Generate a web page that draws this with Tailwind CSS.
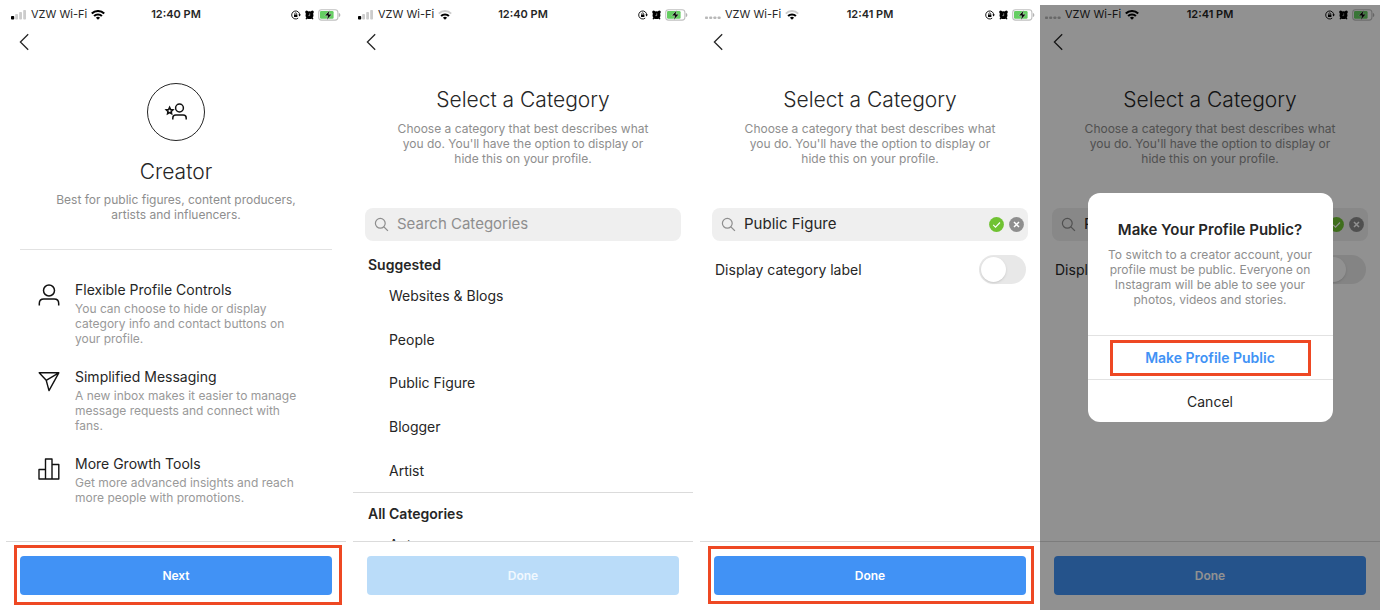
<!DOCTYPE html>
<html lang="en">
<head>
<meta charset="utf-8">
<meta name="viewport" content="width=device-width, initial-scale=1">
<title>Switch to a creator account</title>
<script src="https://cdn.jsdelivr.net/npm/@tailwindcss/browser@4"></script>
</head>
<body class="bg-white font-['Inter','Liberation_Sans',sans-serif] text-[#262626]">
<svg class="hidden" aria-hidden="true">
  <symbol id="bars" viewBox="0 0 16 10"><rect x="0" y="6" width="3.2" height="3.6" rx=".8" fill="#000"/><rect x="4.2" y="4" width="2.8" height="5.6" rx=".8" fill="#ccc"/><rect x="8.2" y="2" width="2.8" height="7.6" rx=".8" fill="#ccc"/><rect x="12.2" y="0" width="2.8" height="9.6" rx=".8" fill="#ccc"/></symbol>
  <symbol id="dots" viewBox="0 0 16 10"><g fill="#000" fill-opacity=".28"><rect x="0" y="6.400" width="3" height="2.6" rx=".8"/><rect x="4.2" y="6.400" width="3" height="2.6" rx=".8"/><rect x="8.4" y="6.400" width="3" height="2.6" rx=".8"/><rect x="12.6" y="6.400" width="3" height="2.6" rx=".8"/></g></symbol>
  <symbol id="wifi" viewBox="0 0 14 10"><g fill="none" stroke="#000" stroke-width="2.100"><path d="M.8 3.6a8.8 8.8 0 0 1 12.4 0"/><path d="M3.1 6.1a5.6 5.6 0 0 1 7.8 0"/></g><path d="M7 9.8 4.9 7.7a3 3 0 0 1 4.2 0z"/></symbol>
  <symbol id="wifi-low" viewBox="0 0 14 10"><path d="M.8 3.6a8.8 8.8 0 0 1 12.4 0" fill="none" stroke="#ccc" stroke-width="1.9"/><path d="M3.1 6.1a5.6 5.6 0 0 1 7.8 0" fill="none" stroke="#000" stroke-width="2.100"/><path d="M7 9.8 4.9 7.7a3 3 0 0 1 4.2 0z"/></symbol>
  <symbol id="rotation" viewBox="0 0 10 10"><path d="M8.7 5A4 4 0 1 0 7.2 8.1" fill="none" stroke="#000" stroke-width=".9"/><path d="M7.3 4.6h2.6L8.6 6.4z"/><rect x="3" y="4.4" width="3.4" height="2.6" rx=".3"/><path d="M3.7 4.6V3.8a1 1 0 0 1 2 0v.8" fill="none" stroke="#000" stroke-width=".7"/></symbol>
  <symbol id="alarm" viewBox="0 0 9 10"><circle cx="4.5" cy="5.2" r="3.9"/><circle cx="1.7" cy="2" r="1.500"/><circle cx="7.3" cy="2" r="1.500"/><path d="m1.700 8-.6 1.300M7.300 8l.6 1.300" stroke="#000" stroke-width="1.300"/><path d="M4.700 3.400v2.200H3.400" fill="none" stroke="#fff" stroke-opacity=".8" stroke-width=".6"/></symbol>
  <symbol id="battery" viewBox="0 0 23 12"><rect x=".7" y=".7" width="19.2" height="10.4" rx="2.8" fill="none" stroke="#000" stroke-opacity=".25" stroke-width="1.1"/><path d="M20.9 4v4c1-.3 1.4-1.1 1.4-2s-.4-1.700-1.400-2z" fill="#000" fill-opacity=".3"/><rect x="2" y="2" width="13.600" height="7.800" rx="1.300" fill="#65ce62"/><path d="M11.600 1.200 6.800 6.700h3l-1 4.300 5.100-5.700h-3.100z" stroke="#fff" stroke-opacity=".6" stroke-width=".6"/></symbol>
  <symbol id="back" viewBox="0 0 10 18"><path d="M9.200 1.200 1.400 9l7.800 7.800" fill="none" stroke="#262626" stroke-width="1.300"/></symbol>
  <symbol id="search" viewBox="0 0 15 15"><circle cx="6.300" cy="6.300" r="4.900" fill="none" stroke="#8e8e8e" stroke-width="1.200"/><path d="m9.900 9.900 4 4" stroke="#8e8e8e" stroke-width="1.300"/></symbol>
  <symbol id="check" viewBox="0 0 15 15"><circle cx="7.500" cy="7.500" r="7.400" fill="#70c232"/><path d="m4.200 7.900 2.300 2.300 4.500-4.700" fill="none" stroke="#fff" stroke-width="1.100"/></symbol>
  <symbol id="clear" viewBox="0 0 15 15"><circle cx="7.500" cy="7.500" r="7.400" fill="#8e8e8e"/><path d="m5 5 5 5m0-5-5 5" stroke="#fff" stroke-width="1.500"/></symbol>
</svg>

<main class="flex min-h-screen pt-[5px] pr-0.5 pb-0.5 pl-1.5">

  <!-- Creator introduction -->
  <section class="flex min-w-0 flex-1 flex-col">
    <div class="grid h-[19px] grid-cols-[1fr_auto_1fr] items-center px-[5px] text-[11px]">
      <div class="flex items-center gap-1"><svg class="h-2.5 w-4"><use href="#bars"/></svg><span>VZW Wi-Fi</span><svg class="h-2.5 w-3.5"><use href="#wifi"/></svg></div>
      <span class="font-semibold">12:40 PM</span>
      <div class="flex items-center justify-end gap-1"><svg class="size-2.5"><use href="#rotation"/></svg><svg class="h-2.5 w-[9px]"><use href="#alarm"/></svg><svg class="h-3 w-[23px]"><use href="#battery"/></svg></div>
    </div>
    <button aria-label="Back" class="flex h-[35px] w-9 items-center pl-[13px]"><svg class="h-[18px] w-2.5"><use href="#back"/></svg></button>
    <div class="flex flex-1 flex-col px-3.5 pt-6">
      <div class="mx-auto grid size-[58px] place-items-center rounded-full border border-[#262626]">
        <svg class="h-5 w-6" viewBox="0 0 24 20" fill="none" stroke="#111" stroke-width="1.500"><circle cx="15.500" cy="6" r="3.900"/><path d="M8.800 17.500v-1.500c0-1.900 1.200-3 3-3h7.400c1.800 0 3 1.100 3 3v1.500"/><path stroke-width="1.600" d="m5.600 5.400 1 2.100 2.300.3-1.700 1.600.4 2.300-2-1.100-2 1.100.4-2.300L2.300 7.800l2.300-.3z"/></svg>
      </div>
      <h1 class="mt-[17px] text-center text-[21px] leading-7 font-light">Creator</h1>
      <p class="mx-auto mt-1.5 max-w-[270px] text-center text-[12px] leading-[15px] text-[#8e8e8e]">Best for public figures, content producers, artists and influencers.</p>
      <hr class="mt-[27px] border-[#e2e2e2]">
      <ul class="mt-[30px] flex flex-col gap-[21px] pr-7 pl-[18px]">
        <li class="flex gap-[15px]">
          <svg class="mt-1 h-[23px] w-[22px] shrink-0" viewBox="0 0 22 23" fill="none" stroke="#111" stroke-width="1.500"><circle cx="11" cy="6.500" r="5.500"/><path d="M1.300 21.500v-2c0-3 1.700-4.500 4.500-4.500h10.400c2.800 0 4.500 1.500 4.500 4.500v2"/></svg>
          <div><h2 class="text-[14px] leading-5">Flexible Profile Controls</h2><p class="mt-px text-[12px] leading-[15px] text-[#999]">You can choose to hide or display category info and contact buttons on your profile.</p></div>
        </li>
        <li class="flex gap-[15px]">
          <svg class="mt-1 h-[22px] w-[22px] shrink-0" viewBox="0 0 22 22" fill="none" stroke="#111" stroke-width="1.400" stroke-linejoin="round"><path d="M1.200 1.800h19.600L11 19.600 8.200 9.300zM8.200 9.300l12.600-7.500"/></svg>
          <div><h2 class="text-[14px] leading-5">Simplified Messaging</h2><p class="mt-px text-[12px] leading-[15px] text-[#999]">A new inbox makes it easier to manage message requests and connect with fans.</p></div>
        </li>
        <li class="flex gap-[15px]">
          <svg class="mt-1 h-[22px] w-[22px] shrink-0" viewBox="0 0 22 22" fill="none" stroke="#111" stroke-width="1.400" stroke-linejoin="round"><path d="M1 21V11.500h6.500V21zM7.500 21V1H14v20zM14 21V6.500h6.800V21z"/></svg>
          <div><h2 class="text-[14px] leading-5">More Growth Tools</h2><p class="mt-px text-[12px] leading-[15px] text-[#999]">Get more advanced insights and reach more people with promotions.</p></div>
        </li>
      </ul>
    </div>
    <footer class="relative border-t border-[#dbdbdb] px-3.5 pt-3.5 pb-[15px]">
      <button class="h-[39px] w-full rounded bg-[#4192f5] text-[12px] font-semibold text-white">Next</button>
      <div class="pointer-events-none absolute top-[3px] right-[4px] bottom-[5px] left-2 border-3 border-[#ee4823]"></div>
    </footer>
  </section>

  <!-- Category list -->
  <section class="ml-[7px] flex min-w-0 flex-1 flex-col">
    <div class="grid h-[19px] grid-cols-[1fr_auto_1fr] items-center px-[5px] text-[11px]">
      <div class="flex items-center gap-1"><svg class="h-2.5 w-4"><use href="#bars"/></svg><span>VZW Wi-Fi</span><svg class="h-2.5 w-3.5"><use href="#wifi-low"/></svg></div>
      <span class="font-semibold">12:40 PM</span>
      <div class="flex items-center justify-end gap-1"><svg class="size-2.5"><use href="#rotation"/></svg><svg class="h-2.5 w-[9px]"><use href="#alarm"/></svg><svg class="h-3 w-[23px]"><use href="#battery"/></svg></div>
    </div>
    <button aria-label="Back" class="flex h-[35px] w-9 items-center pl-[13px]"><svg class="h-[18px] w-2.5"><use href="#back"/></svg></button>
    <h1 class="mt-[27px] text-center text-[21px] leading-7 font-light">Select a Category</h1>
    <p class="mx-auto mt-[7px] max-w-[260px] text-center text-[12px] leading-[15px] text-[#8e8e8e]">Choose a category that best describes what you do. You'll have the option to display or hide this on your profile.</p>
    <label class="mx-3 mt-[42px] flex h-[33px] items-center gap-2 rounded-lg bg-[#efefef] px-[9px]">
      <svg class="size-[15px] shrink-0"><use href="#search"/></svg>
      <input type="text" aria-label="Search categories" placeholder="Search Categories" class="min-w-0 flex-1 bg-transparent text-[15px] outline-none placeholder:text-[#8e8e8e]">
    </label>
    <div class="min-h-0 shrink grow basis-[0px] overflow-hidden">
      <h2 class="mt-[15px] px-[15px] text-[14px] leading-[18px] font-semibold">Suggested</h2>
      <ul class="grid h-[218px] auto-rows-fr items-center px-9 text-[14px]">
        <li>Websites &amp; Blogs</li><li>People</li><li>Public Figure</li><li>Blogger</li><li>Artist</li>
      </ul>
      <h2 class="border-t border-[#dbdbdb] px-[15px] pt-3 text-[14px] leading-[18px] font-semibold">All Categories</h2>
      <ul class="px-9 text-[14px] leading-[44px]"><li>Actor</li></ul>
    </div>
    <footer class="border-t border-[#dbdbdb] px-3.5 pt-3.5 pb-[15px]">
      <button disabled class="h-[39px] w-full rounded bg-[#badcf9] text-[12px] font-semibold text-white/80">Done</button>
    </footer>
  </section>

  <!-- Category chosen -->
  <section class="ml-[7px] flex min-w-0 flex-1 flex-col">
    <div class="grid h-[19px] grid-cols-[1fr_auto_1fr] items-center px-[5px] text-[11px]">
      <div class="flex items-center gap-1"><svg class="h-2.5 w-4"><use href="#dots"/></svg><span>VZW Wi-Fi</span><svg class="h-2.5 w-3.5"><use href="#wifi-low"/></svg></div>
      <span class="font-semibold">12:41 PM</span>
      <div class="flex items-center justify-end gap-1"><svg class="size-2.5"><use href="#rotation"/></svg><svg class="h-2.5 w-[9px]"><use href="#alarm"/></svg><svg class="h-3 w-[23px]"><use href="#battery"/></svg></div>
    </div>
    <button aria-label="Back" class="flex h-[35px] w-9 items-center pl-[13px]"><svg class="h-[18px] w-2.5"><use href="#back"/></svg></button>
    <h1 class="mt-[27px] text-center text-[21px] leading-7 font-light">Select a Category</h1>
    <p class="mx-auto mt-[7px] max-w-[260px] text-center text-[12px] leading-[15px] text-[#8e8e8e]">Choose a category that best describes what you do. You'll have the option to display or hide this on your profile.</p>
    <div class="mx-3 mt-[42px] flex h-[33px] items-center gap-[5px] rounded-lg bg-[#efefef] pr-1 pl-[9px]">
      <label class="flex min-w-0 flex-1 items-center gap-2"><svg class="size-[15px] shrink-0"><use href="#search"/></svg>
      <input type="text" aria-label="Category" value="Public Figure" class="min-w-0 flex-1 bg-transparent text-[15px] outline-none"></label>
      <svg class="size-[15px]"><use href="#check"/></svg>
      <button aria-label="Clear"><svg class="size-[15px]"><use href="#clear"/></svg></button>
    </div>
    <label class="mt-3.5 flex flex-1 items-start justify-between pr-3.5 pl-[15px] text-[14px] leading-[29px]">Display category label
      <input type="checkbox" class="h-[29px] w-[47px] appearance-none rounded-full bg-[#e8e8e8] p-0.5 before:block before:size-[25px] before:rounded-full before:bg-white before:shadow-sm">
    </label>
    <footer class="relative border-t border-[#dbdbdb] px-3.5 pt-3.5 pb-[15px]">
      <button class="h-[39px] w-full rounded bg-[#4192f5] text-[12px] font-semibold text-white">Done</button>
      <div class="pointer-events-none absolute top-1 right-[6px] bottom-1.5 left-2 border-3 border-[#ee4823]"></div>
    </footer>
  </section>

  <!-- Confirmation dialog over the chosen category -->
  <section class="relative flex min-w-0 flex-1 flex-col">
    <div class="grid h-[19px] grid-cols-[1fr_auto_1fr] items-center px-[5px] text-[11px]">
      <div class="flex items-center gap-1"><svg class="h-2.5 w-4"><use href="#dots"/></svg><span>VZW Wi-Fi</span><svg class="h-2.5 w-3.5"><use href="#wifi"/></svg></div>
      <span class="font-semibold">12:41 PM</span>
      <div class="flex items-center justify-end gap-1"><svg class="size-2.5"><use href="#rotation"/></svg><svg class="h-2.5 w-[9px]"><use href="#alarm"/></svg><svg class="h-3 w-[23px]"><use href="#battery"/></svg></div>
    </div>
    <button aria-label="Back" class="flex h-[35px] w-9 items-center pl-[13px]"><svg class="h-[18px] w-2.5"><use href="#back"/></svg></button>
    <h1 class="mt-[27px] text-center text-[21px] leading-7 font-light">Select a Category</h1>
    <p class="mx-auto mt-[7px] max-w-[260px] text-center text-[12px] leading-[15px] text-[#8e8e8e]">Choose a category that best describes what you do. You'll have the option to display or hide this on your profile.</p>
    <div class="mx-3 mt-[42px] flex h-[33px] items-center gap-[5px] rounded-lg bg-[#efefef] pr-1 pl-[9px]">
      <label class="flex min-w-0 flex-1 items-center gap-2"><svg class="size-[15px] shrink-0"><use href="#search"/></svg>
      <input type="text" aria-label="Category" value="Public Figure" class="min-w-0 flex-1 bg-transparent text-[15px] outline-none"></label>
      <svg class="size-[15px]"><use href="#check"/></svg>
      <button aria-label="Clear"><svg class="size-[15px]"><use href="#clear"/></svg></button>
    </div>
    <label class="mt-3.5 flex flex-1 items-start justify-between pr-3.5 pl-[15px] text-[14px] leading-[29px]">Display category label
      <input type="checkbox" class="h-[29px] w-[47px] appearance-none rounded-full bg-[#e8e8e8] p-0.5 before:block before:size-[25px] before:rounded-full before:bg-white before:shadow-sm">
    </label>
    <footer class="border-t border-[#dbdbdb] px-3.5 pt-3.5 pb-[15px]">
      <button class="h-[39px] w-full rounded bg-[#4192f5] text-[12px] font-semibold text-white">Done</button>
    </footer>
    <div class="absolute inset-0 grid place-items-center bg-black/43">
      <div role="dialog" aria-labelledby="dialog-title" class="w-[245px] rounded-xl bg-white text-center">
        <h2 id="dialog-title" class="pt-[27px] text-[15px] leading-5 font-semibold">Make Your Profile Public?</h2>
        <p class="mx-auto mt-[7px] max-w-[220px] pb-7 text-[12px] leading-[15px] text-[#8e8e8e]">To switch to a creator account, your profile must be public. Everyone on Instagram will be able to see your photos, videos and stories.</p>
        <div class="relative border-t border-[#e2e2e2]">
          <button class="h-[43px] w-full text-[14px] font-semibold text-[#4192f5]">Make Profile Public</button>
          <div class="pointer-events-none absolute inset-x-[22px] top-1 bottom-[3px] border-3 border-[#ee4823]"></div>
        </div>
        <button class="h-[43px] w-full border-t border-[#e2e2e2] text-[14px]">Cancel</button>
      </div>
    </div>
  </section>
</main>
</body>
</html>
